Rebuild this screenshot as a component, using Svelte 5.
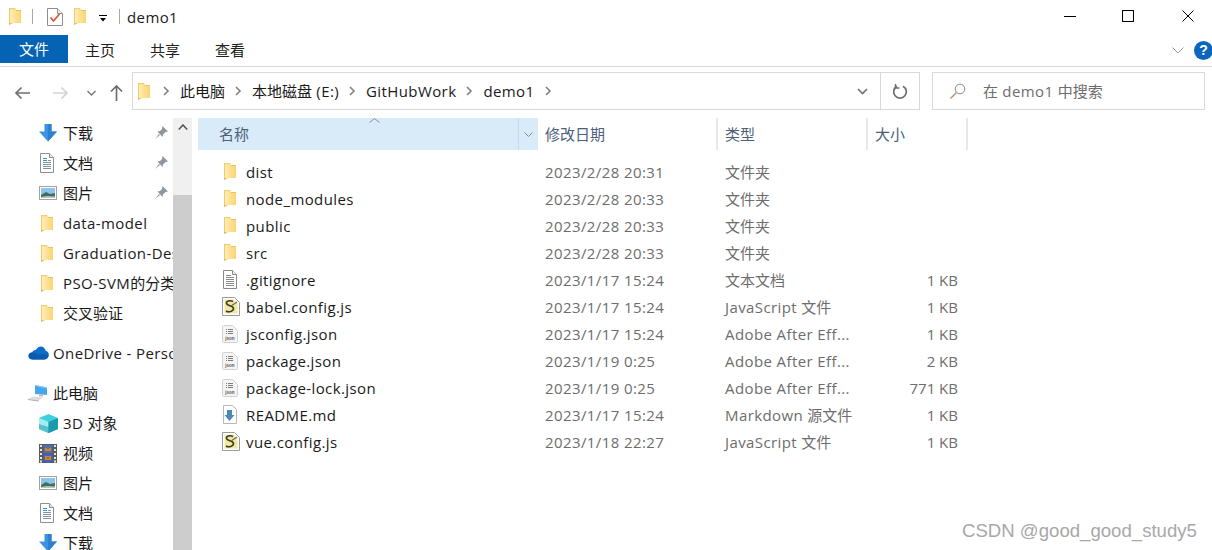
<script>
  const pinned = [
    { icon: 'download', label: '下载', pin: true },
    { icon: 'docs', label: '文档', pin: true },
    { icon: 'pics', label: '图片', pin: true },
    { icon: 'folder', label: 'data-model' },
    { icon: 'folder', label: 'Graduation-Design' },
    { icon: 'folder', label: 'PSO-SVM的分类算法' },
    { icon: 'folder', label: '交叉验证' }
  ];

  const thisPc = [
    { icon: 'cube', label: '3D 对象' },
    { icon: 'video', label: '视频' },
    { icon: 'pics', label: '图片' },
    { icon: 'docs', label: '文档' },
    { icon: 'download', label: '下载' }
  ];

  const crumbs = ['此电脑', '本地磁盘 (E:)', 'GitHubWork', 'demo1'];

  const tabs = ['主页', '共享', '查看'];

  const files = [
    { icon: 'folder', name: 'dist', date: '2023/2/28 20:31', type: '文件夹', size: '' },
    { icon: 'folder', name: 'node_modules', date: '2023/2/28 20:33', type: '文件夹', size: '' },
    { icon: 'folder', name: 'public', date: '2023/2/28 20:33', type: '文件夹', size: '' },
    { icon: 'folder', name: 'src', date: '2023/2/28 20:33', type: '文件夹', size: '' },
    { icon: 'text', name: '.gitignore', date: '2023/1/17 15:24', type: '文本文档', size: '1 KB' },
    { icon: 'js', name: 'babel.config.js', date: '2023/1/17 15:24', type: 'JavaScript 文件', size: '1 KB' },
    { icon: 'json', name: 'jsconfig.json', date: '2023/1/17 15:24', type: 'Adobe After Eff...', size: '1 KB' },
    { icon: 'json', name: 'package.json', date: '2023/1/19 0:25', type: 'Adobe After Eff...', size: '2 KB' },
    { icon: 'json', name: 'package-lock.json', date: '2023/1/19 0:25', type: 'Adobe After Eff...', size: '771 KB' },
    { icon: 'md', name: 'README.md', date: '2023/1/17 15:24', type: 'Markdown 源文件', size: '1 KB' },
    { icon: 'js', name: 'vue.config.js', date: '2023/1/18 22:27', type: 'JavaScript 文件', size: '1 KB' }
  ];

  // Latin runs are set a little wider than the CJK ones
  function runs(text) {
    return text.split(/([\u4e00-\u9fff]+)/).filter(Boolean);
  }

  const isCjk = (s) => /[\u4e00-\u9fff]/.test(s);
</script>

{#snippet txt(text)}{#each runs(text) as run}<span class:lat={!isCjk(run)}>{run}</span>{/each}{/snippet}

{#snippet icon(name)}
  {#if name === 'folder'}
    <svg class="ico" width="16" height="17" viewBox="-2 0 16 17">
      <path d="M0 0h6l1 2h5v13H0z" fill="url(#folderFill)" />
      <path d="M0 0h6l.6 1.200H0z" fill="#f3cf74" />
      <path d="M0 0h1v17H0z" fill="#f0cb6c" />
      <path d="M0 15h4L0 17z" fill="#e6bd5c" />
      <path d="M7 2h5v1H7z" fill="#e9c163" />
    </svg>
  {:else if name === 'download'}
    <svg class="ico" width="18" height="18" viewBox="0 0 18 18">
      <path d="M5.500 0h7v7.500H18L9 17.500 0 7.500h5.500z" fill="#3d93e3" />
      <path d="M9 0h3.500v7.500H18L9 17.500z" fill="#2f7fd1" />
    </svg>
  {:else if name === 'docs'}
    <svg class="ico" width="16" height="20" viewBox="0 0 16 20">
      <path d="M1.500.5h9l4 4v15h-13z" fill="#fff" stroke="#8f8f8f" />
      <path d="M10.500.5v4h4" fill="#e8e8e8" stroke="#8f8f8f" />
      <path d="M4 5.500h4M4 7.500h4" stroke="#2f8fdc" />
      <path d="M9 7.500h3M4 9.500h8M4 11.500h8M4 13.500h8M4 15.500h8" stroke="#7f93a5" />
    </svg>
  {:else if name === 'pics'}
    <svg class="ico" width="18" height="14" viewBox="0 0 18 14">
      <rect x=".5" y=".5" width="17" height="13" fill="#fff" stroke="#a3a3a3" />
      <rect x="2" y="2" width="14" height="10" fill="#8fc4ea" />
      <path d="M2 9l5-3 4 2 5-1v5H2z" fill="#3f6f62" />
      <path d="M2 11l6-1 8 .5V12H2z" fill="#b9c9b0" />
    </svg>
  {:else if name === 'cloud'}
    <svg class="ico" width="21" height="14" viewBox="0 0 21 14">
      <path d="M5 13.500C2 13.500.5 11.800.5 10 .5 8 2 6.700 4 6.600 5 4.800 6.500 3.900 8 3.800 9.300 1.500 11 .5 12.800.5c2.500 0 4.400 1.700 4.800 4.300 2 .3 3.200 2 3.200 4 0 2.700-2 4.700-4.300 4.700z" fill="#0f6cc7" />
      <path d="M5 13.500C2 13.500.5 11.800.5 10 .5 8 2 6.700 4 6.600c3-.4 5 1 6 2.500 2-1 5-1.500 10.500-.3 0 2.700-1.700 4.700-4 4.700z" fill="#0a5cb0" />
    </svg>
  {:else if name === 'pc'}
    <svg class="ico" width="20" height="18" viewBox="0 0 20 18">
      <path d="M7 1l12 2.500V11L7 10z" fill="#46a5ee" />
      <path d="M7 1l12 2.500v1L7 2z" fill="#8fcbf5" />
      <path d="M11 10.500h4v2h-4z" fill="#bcbcbc" />
      <path d="M5 12.500l10 1-4 3L0 15z" fill="#dcdcdc" />
      <path d="M0 15l11 1.500v1L0 16z" fill="#aeaeae" />
    </svg>
  {:else if name === 'cube'}
    <svg class="ico" width="19" height="19" viewBox="0 0 19 19">
      <path d="M9.500 0L19 4v11l-9.500 4L0 15V4z" fill="#3fd0e0" />
      <path d="M0 4l9.500 4v11L0 15z" fill="#a5ecef" />
      <path d="M19 4L9.500 8v11l9.500-4z" fill="#1d98ad" />
      <path d="M0 10l9.500 3 9.500-3v5l-9.500 4L0 15z" fill="#15a0b0" opacity=".55" />
    </svg>
  {:else if name === 'video'}
    <svg class="ico" width="18" height="19" viewBox="0 0 18 19">
      <rect width="18" height="19" fill="#5a5a5a" />
      <path d="M1 1h2v2H1zM1 5h2v2H1zM1 9h2v2H1zM1 13h2v2H1zM1 16.500h2v2H1zM15 1h2v2h-2zM15 5h2v2h-2zM15 9h2v2h-2zM15 13h2v2h-2zM15 16.500h2v2h-2z" fill="#e6e6e6" />
      <rect x="4.500" y="1" width="9" height="8" fill="#4d6fb8" />
      <rect x="4.500" y="10" width="9" height="8" fill="#3f63c4" />
      <path d="M6 4h6v3H6zM6 12h6v4H6z" fill="#c58a2c" />
      <path d="M8 3h2v2H8zM8 13h2v2H8z" fill="#c94f3a" />
    </svg>
  {:else if name === 'text'}
    <svg class="ico" width="16" height="19" viewBox="0 0 16 19">
      <path d="M1.500.5h9l4 4v14h-13z" fill="#fff" stroke="#8a8a8a" />
      <path d="M10.500.5v4h4" fill="#eee" stroke="#8a8a8a" />
      <path d="M4 5.500h5M4 7.500h8M4 9.500h8M4 11.500h8M4 13.500h8M4 15.500h8" stroke="#8a8a8a" />
    </svg>
  {:else if name === 'js'}
    <svg class="ico" width="18" height="19" viewBox="0 0 18 19">
      <path d="M.5.5h12l5 5v13H.5z" fill="#fff" stroke="#9a9a9a" />
      <path d="M2.500 2.500h9l4 4v10h-13z" fill="#f1e9a2" />
      <path d="M11 4.500C8 3 4 4 4.500 6.500s7 2 7 5-5 4-7.500 2.500" fill="none" stroke="#3b3b2e" stroke-width="1.600" />
      <path d="M9 9l6-4" stroke="#6f6f5a" stroke-width="1.300" />
    </svg>
  {:else if name === 'json'}
    <svg class="ico" width="16" height="18" viewBox="0 0 16 18">
      <path d="M.5 1.500a1 1 0 011-1h9l5 5v11a1 1 0 01-1 1h-13a1 1 0 01-1-1z" fill="#f4f4f4" stroke="#d2d2d2" />
      <path d="M4 4.500h1M6 4.500h5M4 6.500h1M6 6.500h5M4 8.500h1M6 8.500h5" stroke="#7d7d7d" />
      <text x="8" y="15" class="tiny" text-anchor="middle">json</text>
    </svg>
  {:else if name === 'md'}
    <svg class="ico" width="16" height="19" viewBox="0 0 16 19">
      <path d="M1.500.5h9l4 4v14h-13z" fill="#fff" stroke="#b8b8b8" />
      <path d="M5 5h5v5h2.500l-5 6-5-6H5z" fill="#4f88b5" />
    </svg>
  {:else if name === 'check'}
    <svg class="ico" width="16" height="18" viewBox="0 0 16 18">
      <path d="M.5.5h10l5 5v12H.5z" fill="#fff" stroke="#8e8e8e" />
      <path d="M10.500.5v5h5" fill="#eee" stroke="#8e8e8e" />
      <path d="M3.500 9.500l3 3.500 6-7" fill="none" stroke="#e2542a" stroke-width="1.700" />
    </svg>
  {:else if name === 'pin'}
    <svg class="ico" width="13" height="13" viewBox="0 0 13 13">
      <path d="M7.500 0L13 5.500l-2.500.5-2.500 2.500-.5 2.500L2.500 5.500 5 5l2-2z" fill="#8f969d" />
      <path d="M4 8L0 13l5-4z" fill="#8f969d" />
    </svg>
  {/if}
{/snippet}

{#snippet chevron()}
  <svg class="ico chev" width="7" height="10" viewBox="0 0 7 10"><path d="M1 1l4 4-4 4" fill="none" stroke="#808080" stroke-width="1.600" /></svg>
{/snippet}

<div class="window">
  <svg class="defs" width="0" height="0">
    <defs>
      <linearGradient id="folderFill" x1="0" x2="1" y1="0" y2="0">
        <stop offset="0" stop-color="#fff0bd" />
        <stop offset=".45" stop-color="#fde39a" />
        <stop offset="1" stop-color="#fbd670" />
      </linearGradient>
    </defs>
  </svg>

  <header class="titlebar">
    <span class="qat">{@render icon('folder')}</span>
    <span class="sep"></span>
    <span class="qat-check">{@render icon('check')}</span>
    <span class="qat-folder">{@render icon('folder')}</span>
    <svg class="ico qat-drop" width="8" height="7" viewBox="0 0 8 7"><path d="M0 .5h8" stroke="#000" /><path d="M1 3h6L4 6.500z" fill="#000" /></svg>
    <span class="sep sep2"></span>
    <span class="title lat">demo1</span>
    <div class="winbtns">
      <svg width="12" height="12" viewBox="0 0 12 12"><path d="M0 6.500h12" stroke="#000" /></svg>
      <svg width="12" height="12" viewBox="0 0 12 12"><rect x=".5" y=".5" width="11" height="11" fill="none" stroke="#000" /></svg>
      <svg class="close" width="12" height="12" viewBox="0 0 12 12"><path d="M.5.500l11 11M11.500.500l-11 11" stroke="#000" /></svg>
    </div>
  </header>

  <div class="ribbon">
    <div class="tab-file">文件</div>
    {#each tabs as t}
      <div class="tab">{t}</div>
    {/each}
    <div class="ribbon-right">
      <svg width="12" height="7" viewBox="0 0 12 7"><path d="M.5.500L6 6l5.500-5.500" fill="none" stroke="#9a9a9a" /></svg>
      <span class="help">?</span>
    </div>
  </div>

  <div class="addressrow">
    <div class="navbtns">
      <svg width="16" height="14" viewBox="0 0 16 14"><path d="M16 7H2M7.500 1.500L2 7l5.500 5.500" fill="none" stroke="#6e6e6e" stroke-width="1.700" /></svg>
      <svg class="fwd" width="16" height="14" viewBox="0 0 16 14"><path d="M0 7h14M8.500 1.500L14 7l-5.500 5.500" fill="none" stroke="#d2d2d2" stroke-width="1.700" /></svg>
      <svg class="hist" width="9" height="6" viewBox="0 0 9 6"><path d="M.5 1l4 4 4-4" fill="none" stroke="#7c7c7c" stroke-width="1.500" /></svg>
      <svg class="up" width="13" height="17" viewBox="0 0 13 17"><path d="M6.500 17V2M1 7.500L6.500 2 12 7.500" fill="none" stroke="#6e6e6e" stroke-width="1.700" /></svg>
    </div>
    <div class="address">
      <span class="addr-folder">{@render icon('folder')}</span>
      {@render chevron()}
      {#each crumbs as c}
        <span class="crumb">{@render txt(c)}</span>
        {@render chevron()}
      {/each}
      <div class="addr-end">
        <svg width="11" height="7" viewBox="0 0 11 7"><path d="M1 1l4.500 4.500L10 1" fill="none" stroke="#6e6e6e" stroke-width="1.600" /></svg>
        <span class="addr-div"></span>
        <svg class="refresh" width="15" height="16" viewBox="0 0 15 16"><path d="M4 3.200a6.300 6.300 0 1 0 6 0" fill="none" stroke="#6e6e6e" stroke-width="1.700" /><path d="M2.500 1v4h4" fill="none" stroke="#6e6e6e" stroke-width="1.500" /></svg>
      </div>
    </div>
    <div class="search">
      <svg width="16" height="16" viewBox="0 0 16 16"><circle cx="10" cy="6" r="4.800" fill="none" stroke="#8a8a8a" /><path d="M6.500 9.500L.5 15.500" stroke="#b08a70" stroke-width="1.200" /></svg>
      <span>{@render txt('在 demo1 中搜索')}</span>
    </div>
  </div>

  <main class="body">
    <nav class="sidebar">
      {#each pinned as r}
        <div class="navrow">
          <span class="navicon">{@render icon(r.icon)}</span>
          <span class="navlabel">{@render txt(r.label)}</span>
          {#if r.pin}<span class="pin">{@render icon('pin')}</span>{/if}
        </div>
      {/each}
      <div class="navrow root">
        <span class="navicon">{@render icon('cloud')}</span>
        <span class="navlabel lat">OneDrive - Personal</span>
      </div>
      <div class="navrow root">
        <span class="navicon">{@render icon('pc')}</span>
        <span class="navlabel">此电脑</span>
      </div>
      {#each thisPc as r}
        <div class="navrow">
          <span class="navicon">{@render icon(r.icon)}</span>
          <span class="navlabel">{@render txt(r.label)}</span>
        </div>
      {/each}
    </nav>

    <div class="scrollbar">
      <div class="sb-btn"><svg width="10" height="6" viewBox="0 0 10 6"><path d="M.8 5.500L5 1l4.200 4.500" fill="none" stroke="#505050" stroke-width="1.500" /></svg></div>
      <div class="sb-thumb"></div>
    </div>

    <section class="list">
      <div class="colhead">
        <div class="col-name">
          <span>名称</span>
          <svg class="sort" width="11" height="5" viewBox="0 0 11 5"><path d="M.5 4.500l5-4 5 4" fill="none" stroke="#8a8a8a" /></svg>
          <span class="col-drop"><svg width="9" height="5" viewBox="0 0 9 5"><path d="M.5.500l4 4 4-4" fill="none" stroke="#7c8a96" /></svg></span>
        </div>
        <div class="col col-date">修改日期</div>
        <div class="col col-type">类型</div>
        <div class="col col-size">大小</div>
      </div>
      {#each files as f}
        <div class="row">
          <div class="cell-name">
            <span class="fileicon">{@render icon(f.icon)}</span>
            <span class="lat">{f.name}</span>
          </div>
          <div class="cell-date lat">{f.date}</div>
          <div class="cell-type">{@render txt(f.type)}</div>
          <div class="cell-size">{f.size}</div>
        </div>
      {/each}
    </section>
  </main>

  <div class="watermark">CSDN @good_good_study5</div>
</div>

<style>
  :global(body) {
    margin: 0;
    background: #fff;
  }

  .window {
    position: relative;
    width: 1212px;
    height: 550px;
    overflow: hidden;
    background: #fff;
    color: #1a1a1a;
    font-family: "Open Sans", "Noto Sans CJK SC", sans-serif;
    font-size: 15px;
    line-height: 20px;
  }

  .lat {
    letter-spacing: .4px;
  }

  .defs {
    position: absolute;
  }

  .ico {
    display: block;
    flex: none;
  }

  .tiny {
    font-family: "Liberation Sans", sans-serif;
    font-size: 4.500px;
    font-weight: 700;
    fill: #555;
  }

  /* title bar */
  .titlebar {
    height: 35px;
    display: flex;
    align-items: center;
    padding-left: 7px;
    padding-bottom: 2px;
    box-sizing: border-box;
  }

  .sep {
    width: 1px;
    height: 15px;
    background: #a8a8a8;
    margin-left: 9px;
  }

  .sep2 {
    margin-left: 12px;
  }

  .qat-check {
    margin-left: 14px;
  }

  .qat-folder {
    margin-left: 9px;
  }

  .qat-drop {
    margin-left: 11px;
    margin-top: 4px;
  }

  .title {
    margin-left: 7px;
  }

  .winbtns {
    margin-left: auto;
    margin-bottom: 2px;
    padding-right: 18px;
    display: flex;
    gap: 46px;
  }

  .close {
    margin-left: 2px;
  }

  /* ribbon tabs */
  .ribbon {
    height: 31px;
    display: flex;
    align-items: flex-start;
    border-bottom: 1px solid #dadada;
  }

  .tab-file {
    width: 68px;
    height: 28px;
    background: #0563b3;
    color: #fff;
    text-align: center;
    line-height: 28px;
  }

  .tab {
    width: 30px;
    margin-left: 17px;
    margin-right: 18px;
    line-height: 30px;
    color: #222;
  }

  .ribbon-right {
    margin-left: auto;
    margin-right: -1px;
    height: 30px;
    display: flex;
    align-items: center;
    gap: 10px;
  }

  .help {
    width: 19px;
    height: 19px;
    border-radius: 50%;
    background: #0d66bd;
    color: #fff;
    font-family: "Liberation Sans", sans-serif;
    font-weight: 700;
    font-size: 14px;
    line-height: 19px;
    text-align: center;
  }

  /* address row */
  .addressrow {
    height: 38px;
    margin-top: 5px;
    display: flex;
  }

  .navbtns {
    width: 132px;
    display: flex;
    align-items: center;
    padding-left: 14px;
    box-sizing: border-box;
    padding-top: 3px;
  }

  .fwd {
    margin-left: 23px;
  }

  .hist {
    margin-left: 18px;
  }

  .up {
    margin-left: 14px;
  }

  .address {
    width: 788px;
    box-sizing: border-box;
    border: 1px solid #d9d9d9;
    display: flex;
    align-items: center;
    padding-left: 3px;
  }

  .addr-folder {
    margin-right: 1px;
  }

  .chev {
    margin: 0 10px;
  }

  .addr-end {
    margin-left: auto;
    height: 100%;
    display: flex;
    align-items: center;
  }

  .addr-div {
    width: 1px;
    height: 100%;
    background: #d9d9d9;
    margin-left: 12px;
    margin-right: 12px;
  }

  .refresh {
    margin-right: 11px;
  }

  .search {
    width: 273px;
    margin-left: 12px;
    box-sizing: border-box;
    border: 1px solid #d9d9d9;
    display: flex;
    align-items: center;
    gap: 17px;
    padding-left: 17px;
    color: #6d6d6d;
  }

  /* main area */
  .body {
    height: 440px;
    display: flex;
  }

  .sidebar {
    width: 173px;
    flex: none;
    overflow: hidden;
    padding-top: 8px;
    box-sizing: border-box;
  }

  .navrow {
    height: 30px;
    display: flex;
    align-items: center;
    padding-left: 39px;
    white-space: nowrap;
    position: relative;
  }

  .navicon {
    width: 24px;
    flex: none;
  }

  .navrow.root {
    margin-top: 10px;
    padding-left: 28px;
  }

  .navrow.root .navicon {
    width: 25px;
  }

  .pin {
    position: absolute;
    left: 155px;
    top: 8px;
  }

  .scrollbar {
    width: 19px;
    flex: none;
    margin-top: 8px;
    display: flex;
    flex-direction: column;
    background: #f0f0f0;
  }

  .sb-btn {
    height: 77px;
    display: flex;
    justify-content: center;
    padding-top: 6px;
    box-sizing: border-box;
  }

  .sb-thumb {
    flex: 1;
    background: #cdcdcd;
  }

  .list {
    flex: 1;
    padding-left: 6px;
    padding-top: 8px;
  }

  .colhead {
    height: 32px;
    display: flex;
    color: #4c607a;
    margin-bottom: 8px;
    line-height: 32px;
  }

  .col-name {
    width: 340px;
    position: relative;
    background: #d9ebf9;
    padding-left: 21px;
    box-sizing: border-box;
  }

  .sort {
    position: absolute;
    left: 171px;
    top: 0;
  }

  .col-drop {
    position: absolute;
    right: 0;
    top: 0;
    width: 20px;
    height: 32px;
    border-left: 1px solid #bcdcf4;
    display: flex;
    align-items: center;
    justify-content: center;
    box-sizing: border-box;
  }

  .col {
    border-right: 2px solid #e8e8e8;
    padding-left: 7px;
    box-sizing: border-box;
  }

  .col-date {
    width: 180px;
  }

  .col-type {
    width: 150px;
  }

  .col-size {
    width: 100px;
  }

  .row {
    height: 27px;
    display: flex;
    align-items: center;
    white-space: nowrap;
    color: #6d6d6d;
  }

  .cell-name {
    width: 340px;
    display: flex;
    align-items: center;
    color: #1a1a1a;
    box-sizing: border-box;
    padding-left: 24px;
  }

  .fileicon {
    width: 24px;
    flex: none;
  }

  .cell-date {
    width: 180px;
    padding-left: 7px;
    box-sizing: border-box;
  }

  .cell-type {
    width: 150px;
    padding-left: 7px;
    box-sizing: border-box;
  }

  .cell-size {
    width: 90px;
    text-align: right;
  }

  .watermark {
    position: absolute;
    left: 962px;
    top: 518px;
    color: #a8a8a8;
    font-size: 18.600px;
    line-height: 26px;
    font-family: "Liberation Sans", sans-serif;
    white-space: nowrap;
  }
</style>
